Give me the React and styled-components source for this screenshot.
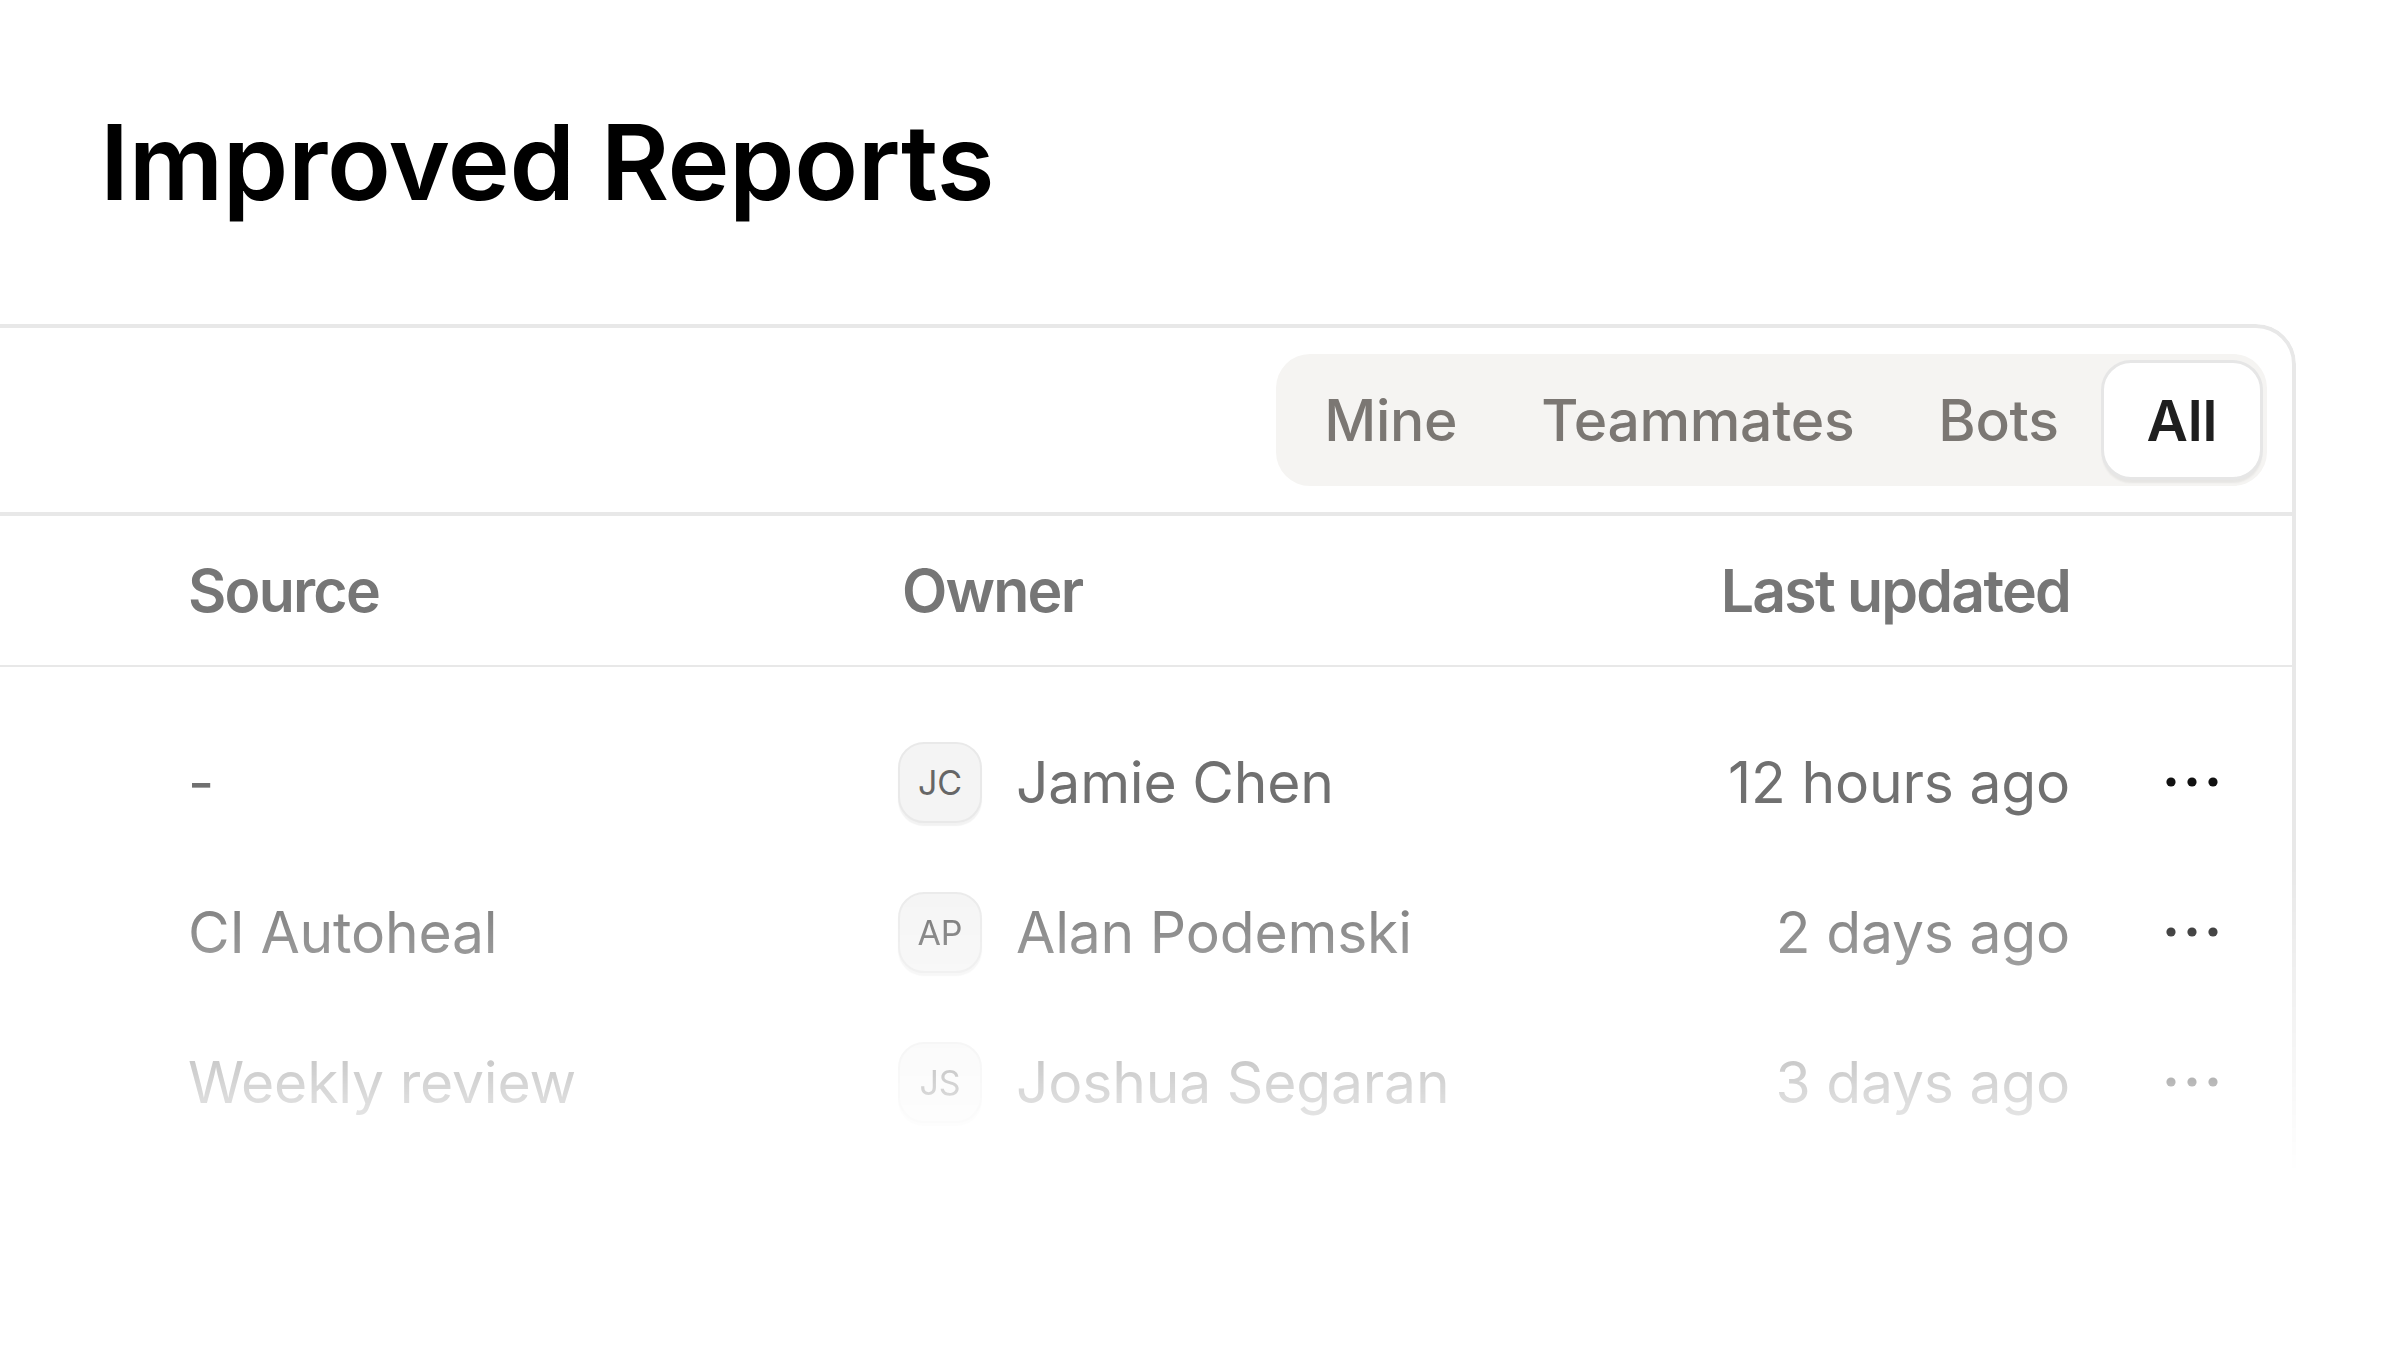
import styled, { createGlobalStyle } from 'styled-components'

const GlobalStyle = createGlobalStyle`
    html, body {
        margin: 0;
        background: #ffffff;
    }
    body {
        font-family: Inter, "Noto Sans", "Liberation Sans", sans-serif;
        overflow: hidden;
    }
`

const Page = styled.div`
    width: 2400px;
    height: 1350px;
    padding-top: 109px;
    box-sizing: border-box;
    overflow: hidden;
`

const Title = styled.h1`
    margin: 0 0 110px 100px;
    font-size: 105px;
    line-height: 1;
    font-weight: 600;
    color: #000;
    letter-spacing: -0.4px;
`

const Card = styled.section`
    margin-left: -50px;
    width: 2346px;
    box-sizing: border-box;
    border: 4px solid #e8e8e8;
    border-radius: 40px;
    background: #fff;
    padding-bottom: 120px;
    -webkit-mask-image: linear-gradient(to bottom, #000 541px, transparent 851px);
    mask-image: linear-gradient(to bottom, #000 541px, transparent 851px);
`

const Toolbar = styled.div`
    display: flex;
    justify-content: flex-end;
    align-items: center;
    height: 184px;
    padding: 0 25px;
    border-bottom: 4px solid #e8e8e8;
`

const Segmented = styled.div`
    display: flex;
    align-items: center;
    height: 132px;
    padding: 0 4px 0 6px;
    box-sizing: border-box;
    background: #f5f4f2;
    border-radius: 34px;
`

const Segment = styled.button`
    display: flex;
    align-items: center;
    height: 120px;
    padding: 0 ${p => (p.$active ? '43px' : '39px')};
    margin: 0;
    box-sizing: border-box;
    font-family: inherit;
    font-size: 57px;
    letter-spacing: -0.3px;
    font-weight: ${p => (p.$active ? 600 : 500)};
    color: ${p => (p.$active ? '#1f1f1f' : '#7b7773')};
    background: ${p => (p.$active ? '#ffffff' : 'transparent')};
    border: 3px solid ${p => (p.$active ? '#e6e6e6' : 'transparent')};
    border-radius: 30px;
    box-shadow: ${p => (p.$active ? '0 4px 2px -1px rgba(0, 0, 0, 0.06)' : 'none')};
    cursor: pointer;
`

const Grid = styled.div`
    display: grid;
    grid-template-columns: 710px 1fr auto 222px;
    align-items: center;
    padding-left: 234px;
`

const HeaderRow = styled(Grid)`
    height: 149px;
    border-bottom: 2px solid #e8e8e8;
`

const HeadCell = styled.div`
    font-size: 59px;
    line-height: 1;
    font-weight: 600;
    letter-spacing: -1.8px;
    color: #767676;
    padding-left: ${p => (p.$inset ? '4px' : '0')};
    text-align: ${p => (p.$right ? 'right' : 'left')};
`

const Body = styled.div`
    padding-top: 40px;
`

const Row = styled(Grid)`
    height: 150px;
`

const Cell = styled.div`
    font-size: 57px;
    line-height: 1;
    letter-spacing: -0.2px;
    color: #707070;
    text-align: ${p => (p.$right ? 'right' : 'left')};
    white-space: nowrap;
`

const Owner = styled.div`
    display: flex;
    align-items: center;
    gap: 34px;
`

const Avatar = styled.span`
    display: flex;
    align-items: center;
    justify-content: center;
    width: 84px;
    height: 81px;
    box-sizing: border-box;
    border-radius: 26px;
    background: #f4f4f4;
    border: 2px solid #e9e9e9;
    box-shadow: 0 3px 1px rgba(0, 0, 0, 0.05);
    font-size: 34px;
    color: #666;
`

const Actions = styled.div`
    display: flex;
    align-items: center;
    padding-left: 96px;
`

const MoreIcon = () => (
    <svg width="52" height="10" viewBox="0 0 52 10">
        <circle cx="5" cy="5" r="4.6" fill="#111" />
        <circle cx="26" cy="5" r="4.6" fill="#111" />
        <circle cx="47" cy="5" r="4.6" fill="#111" />
    </svg>
)

const reports = [
    { source: '-', initials: 'JC', owner: 'Jamie Chen', updated: '12 hours ago' },
    { source: 'CI Autoheal', initials: 'AP', owner: 'Alan Podemski', updated: '2 days ago' },
    { source: 'Weekly review', initials: 'JS', owner: 'Joshua Segaran', updated: '3 days ago' },
]

const App = () => {
    return (
        <Page>
            <GlobalStyle />
            <Title>Improved Reports</Title>
            <Card>
                <Toolbar>
                    <Segmented>
                        <Segment>Mine</Segment>
                        <Segment>Teammates</Segment>
                        <Segment>Bots</Segment>
                        <Segment $active>All</Segment>
                    </Segmented>
                </Toolbar>
                <HeaderRow>
                    <HeadCell>Source</HeadCell>
                    <HeadCell $inset>Owner</HeadCell>
                    <HeadCell $right>Last updated</HeadCell>
                    <div />
                </HeaderRow>
                <Body>
                    {reports.map(r => (
                        <Row key={r.owner}>
                            <Cell>{r.source}</Cell>
                            <Owner>
                                <Avatar>{r.initials}</Avatar>
                                <Cell>{r.owner}</Cell>
                            </Owner>
                            <Cell $right>{r.updated}</Cell>
                            <Actions>
                                <MoreIcon />
                            </Actions>
                        </Row>
                    ))}
                </Body>
            </Card>
        </Page>
    )
}

export default App
